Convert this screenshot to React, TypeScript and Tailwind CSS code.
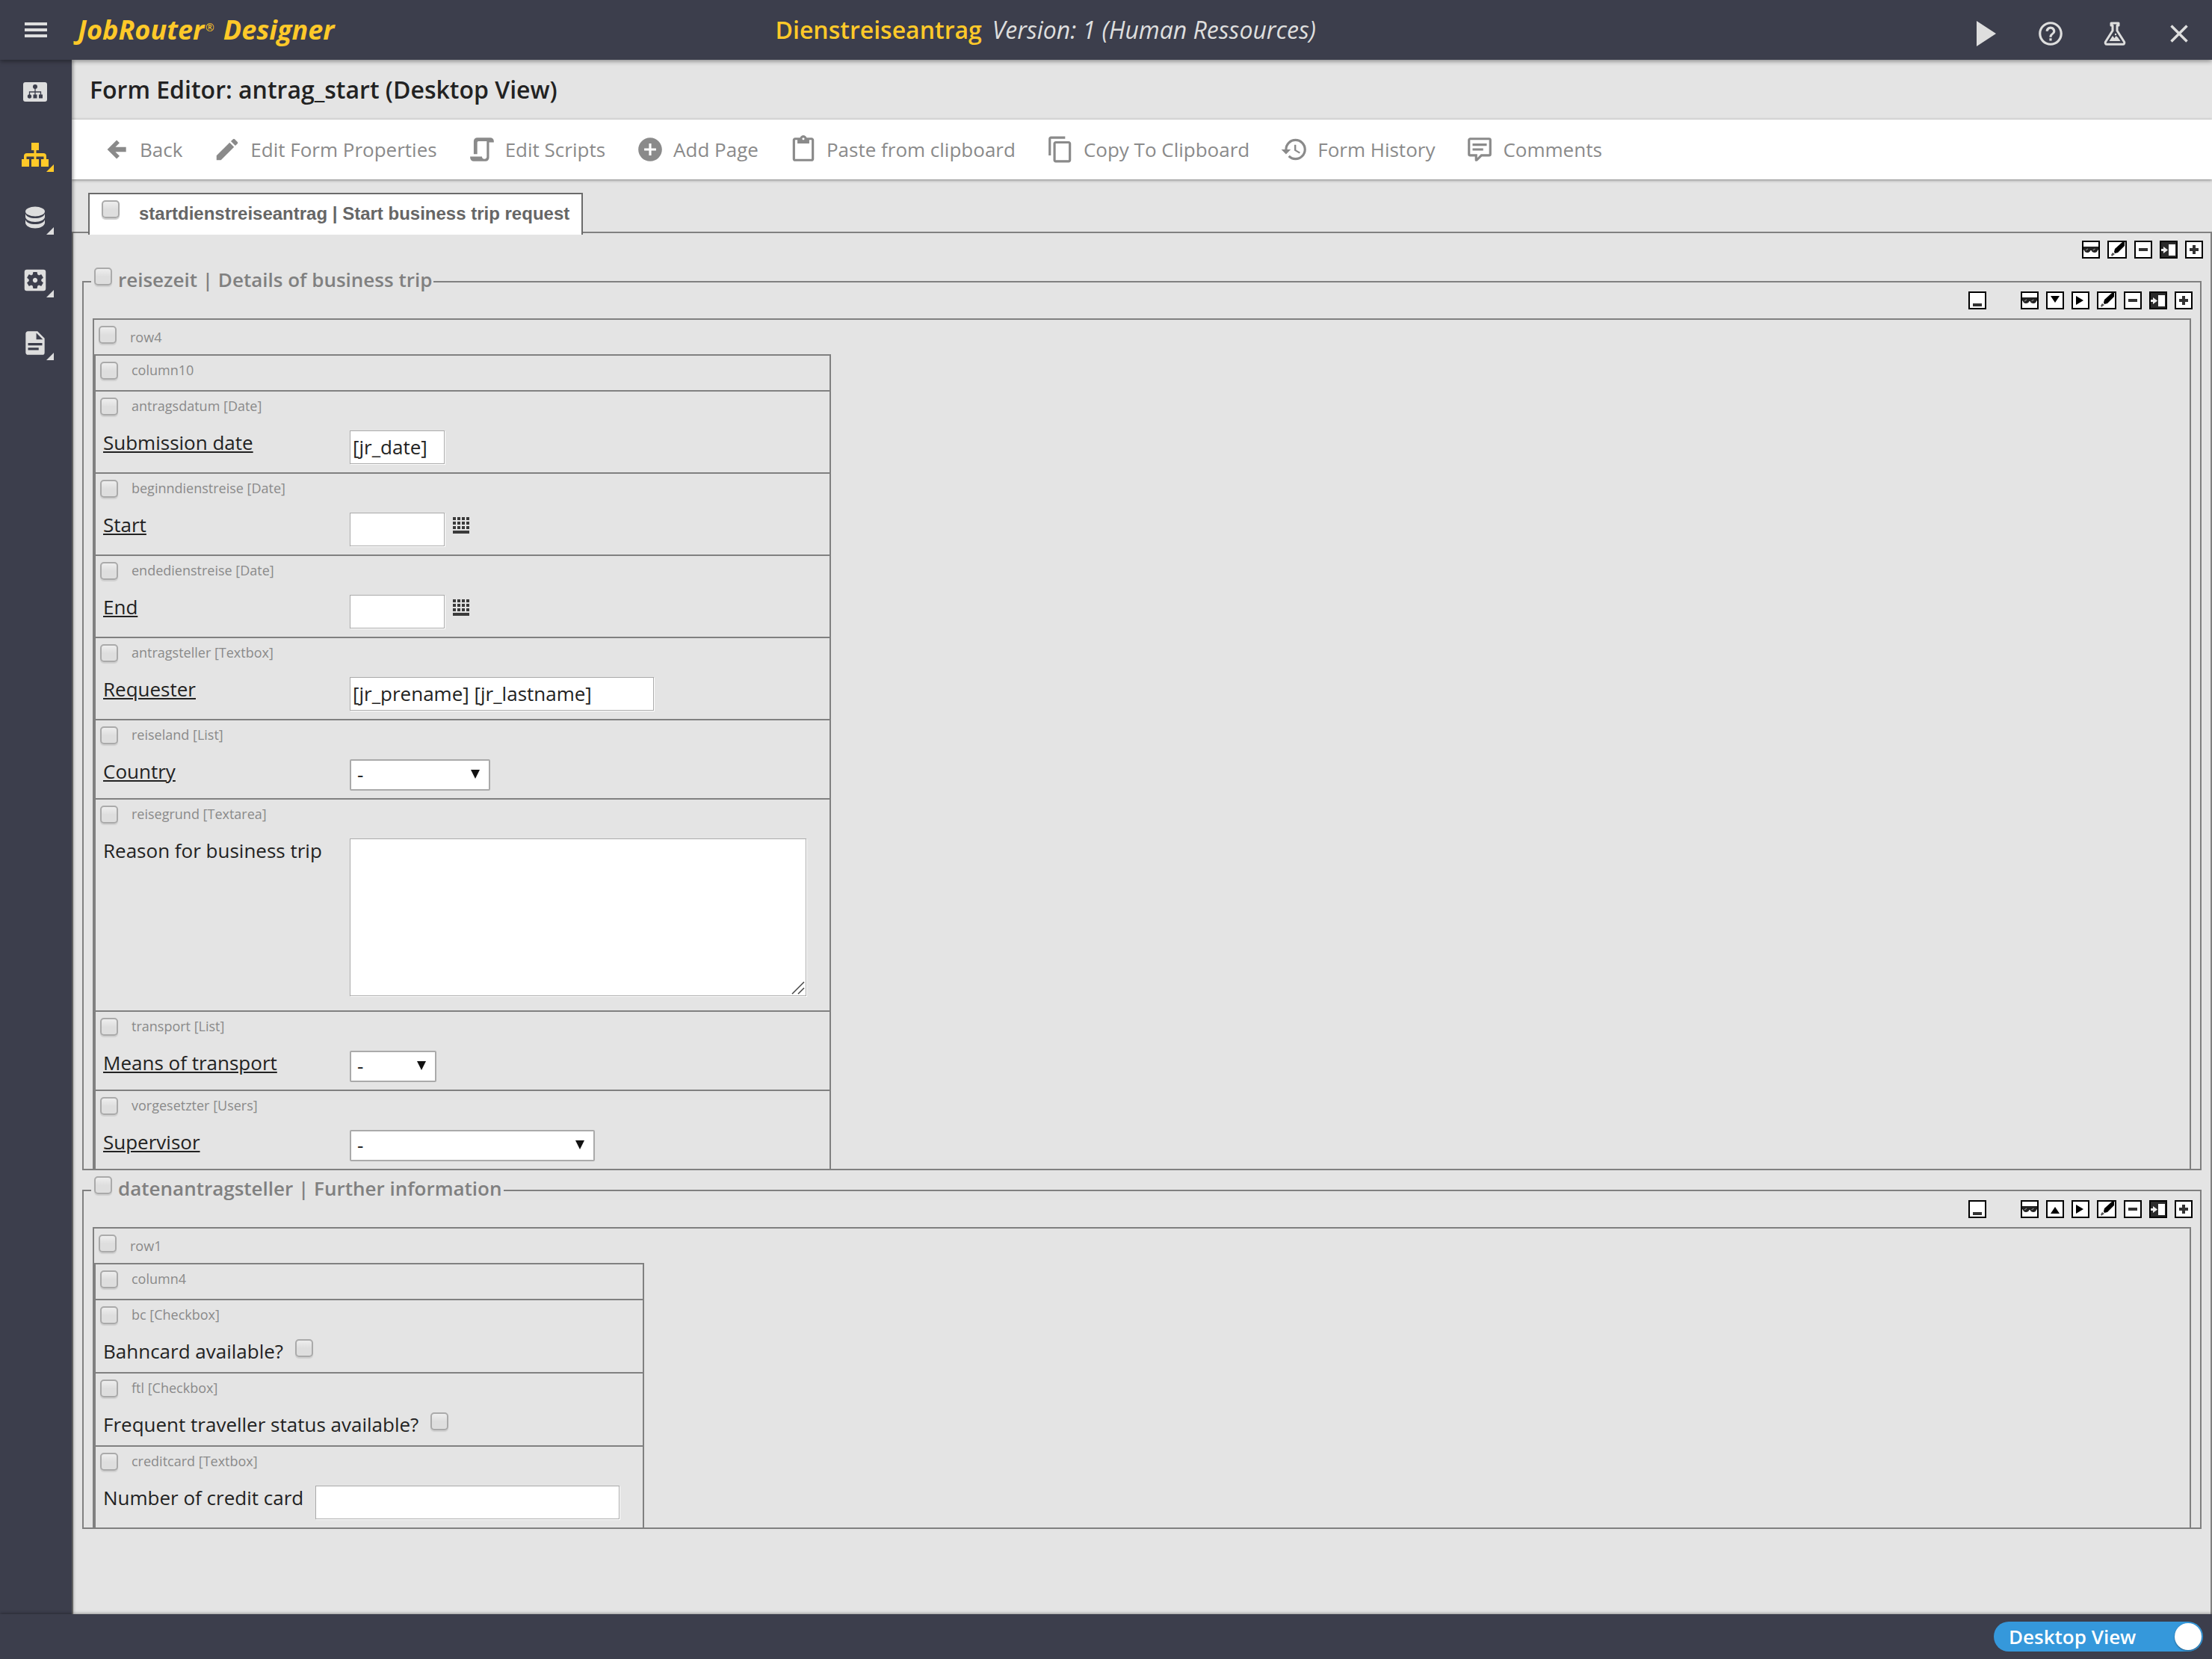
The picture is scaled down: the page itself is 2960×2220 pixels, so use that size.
import type { ReactNode } from "react"
import {
  MdAddCircle,
  MdContentCopy,
  MdContentPaste,
  MdEdit,
  MdHelpOutline,
  MdHistory,
  MdSettingsApplications,
} from "react-icons/md"

type ActionKind = "minimize" | "view" | "down" | "up" | "right" | "edit" | "remove" | "insert" | "add"

const pageActions: ActionKind[] = ["view", "edit", "remove", "insert", "add"]

const actionLabels: Record<ActionKind, string> = {
  minimize: "Minimize",
  view: "View",
  down: "Move down",
  up: "Move up",
  right: "Move right",
  edit: "Edit",
  remove: "Remove",
  insert: "Insert",
  add: "Add",
}

const actionDrawings: Record<ActionKind, ReactNode> = {
  minimize: <rect x="4" y="14" width="12" height="4" fill="#333" />,
  view: (
    <g>
      <path d="M0 6h20v4l-1 1c-.5 2-2 3-4 3s-4-1-4.500-3h-1C9 13 7 14 5 14s-3.500-1-4-3l-1-1z" fill="#222" />
      <path d="M3 11l3-2M12.500 11l3-2" stroke="#888" strokeWidth="1.200" />
    </g>
  ),
  down: <path d="M4 4h12l-6 9z" fill="#000" />,
  up: <path d="M4 16h12l-6-9z" fill="#000" />,
  right: <path d="M4 4v12l10-6z" fill="#000" />,
  edit: (
    <g>
      <path d="M20 0v5L11 14l-4 1-1-2 1-4L17 0z" fill="#000" />
      <path d="M4 14l3 2-4 3-1-2z" fill="#555" />
    </g>
  ),
  remove: <rect x="4" y="8" width="12" height="4" fill="#333" />,
  insert: (
    <g>
      <rect width="20" height="20" fill="#2b2b2b" />
      <rect x="10" y="3" width="9" height="15" fill="#fff" />
      <path d="M0 9h3V6l6 4.500L3 15v-3H0z" fill="#eee" />
    </g>
  ),
  add: <path d="M8 4h4v4h4v4h-4v4H8v-4H4V8h4z" fill="#333" />,
}

function ActionButton({ kind }: { kind: ActionKind }) {
  return (
    <button
      type="button"
      aria-label={actionLabels[kind]}
      className={`h-6 border-2 border-black bg-white ${kind === "edit" ? "w-[26px]" : "w-6"}`}
    >
      <svg viewBox="0 0 20 20" className="h-5 w-full" aria-hidden="true">
        {actionDrawings[kind]}
      </svg>
    </button>
  )
}

function CheckBox({ label, id }: { label?: string; id?: string }) {
  return (
    <input
      type="checkbox"
      id={id}
      aria-label={label}
      className="size-6 shrink-0 appearance-none rounded-[5px] border-2 border-[#aaa] bg-linear-to-b from-[#eee] via-[#dedede] to-[#dedede] shadow-[0_2px_1px_#cfcfcf]"
    />
  )
}

function MdiIcon({ d }: { d: string }) {
  return (
    <svg viewBox="0 0 24 24" className="size-[38px]" fill="currentColor" aria-hidden="true">
      <path d={d} />
    </svg>
  )
}

const toolbarItems: { label: string; icon: ReactNode }[] = [
  {
    label: "Back",
    icon: <MdiIcon d="M20,10V14H11L14.500,17.500L12.080,19.920L4.160,12L12.080,4.080L14.500,6.500L11,10H20Z" />,
  },
  { label: "Edit Form Properties", icon: <MdEdit className="size-[38px]" /> },
  {
    label: "Edit Scripts",
    icon: (
      <MdiIcon d="M14,20A2,2 0 0,0 16,18V5H9A1,1 0 0,0 8,6V16H5V5A3,3 0 0,1 8,2H19A3,3 0 0,1 22,5V6H18V18L18,19A3,3 0 0,1 15,22H5A3,3 0 0,1 2,19V18H12A2,2 0 0,0 14,20Z" />
    ),
  },
  { label: "Add Page", icon: <MdAddCircle className="size-[38px]" /> },
  { label: "Paste from clipboard", icon: <MdContentPaste className="size-[38px]" /> },
  { label: "Copy To Clipboard", icon: <MdContentCopy className="size-[38px]" /> },
  { label: "Form History", icon: <MdHistory className="size-[38px]" /> },
  {
    label: "Comments",
    icon: (
      <MdiIcon d="M9,22A1,1 0 0,1 8,21V18H4A2,2 0 0,1 2,16V4C2,2.890 2.900,2 4,2H20A2,2 0 0,1 22,4V16A2,2 0 0,1 20,18H13.900L10.200,21.710C10,21.900 9.750,22 9.500,22V22H9M10,16V19.080L13.080,16H20V4H4V16H10M6,7H18V9H6V7M6,11H15V13H6V11Z" />
    ),
  },
]

const sideItems: { label: string; icon: ReactNode; active?: boolean; menu?: boolean }[] = [
  {
    label: "Overview",
    icon: (
      <svg viewBox="0 0 32 26" className="h-[26px] w-8" aria-hidden="true">
        <rect width="32" height="26" rx="3" fill="currentColor" />
        <g fill="#3c3e4c">
          <circle cx="16" cy="6" r="3" />
          <circle cx="8.500" cy="19" r="2.700" />
          <rect x="13.500" y="16.500" width="5" height="5" />
          <rect x="21" y="16.500" width="5" height="5" />
        </g>
        <path d="M16 8v9M8.500 17v-4h15v4" fill="none" stroke="#3c3e4c" strokeWidth="1.300" />
      </svg>
    ),
  },
  {
    label: "Processes",
    active: true,
    menu: true,
    icon: (
      <svg viewBox="0 0 36 32" className="h-8 w-9" fill="currentColor" aria-hidden="true">
        <path d="M13 0h10v10h-3.500v4H29a4 4 0 0 1 4 4v4h3v10H26V22h3.500v-3.500h-10V22H23v10H13V22h3.500v-3.500h-10V22H10v10H0V22h3v-4a4 4 0 0 1 4-4h9.500v-4H13z" />
      </svg>
    ),
  },
  {
    label: "Data",
    menu: true,
    icon: (
      <svg viewBox="0 0 26 30" className="h-[30px] w-[26px]" fill="currentColor" aria-hidden="true">
        <ellipse cx="13" cy="7" rx="13" ry="6.500" />
        <path d="M0 10c1.500 4 6.500 6 13 6s11.500-2 13-6v4c0 4-6 7-13 7S0 18 0 14z" />
        <path d="M0 18c1.500 4 6.500 6 13 6s11.500-2 13-6v4c0 4-6 7.500-13 7.500S0 26 0 22z" />
      </svg>
    ),
  },
  { label: "Settings", menu: true, icon: <MdSettingsApplications className="size-[38px]" /> },
  {
    label: "Documents",
    menu: true,
    icon: (
      <MdiIcon d="M13,9H18.500L13,3.500V9M6,2H14L20,8V20A2,2 0 0,1 18,22H6C4.890,22 4,21.100 4,20V4C4,2.890 4.890,2 6,2M15,18V16H6V18H15M18,14V12H6V14H18Z" />
    ),
  },
]

function Header() {
  return (
    <header className="relative z-20 flex h-20 items-center bg-[#3c3e4c] shadow-[0_2px_6px_rgba(0,0,0,0.4)]">
      <button type="button" aria-label="Menu" className="flex h-20 w-24 items-center justify-center text-[#dedede]">
        <svg viewBox="0 0 30 20" className="h-5 w-[30px]" fill="currentColor" aria-hidden="true">
          <path d="M0 0h30v4H0zM0 8h30v4H0zM0 16h30v4H0z" />
        </svg>
      </button>
      <a href="#" className="flex items-start pl-2 text-[36px] leading-[50px] font-bold text-[#ffc929] italic">
        JobRouter
        <span className="pt-3 pl-0.5 text-sm font-normal not-italic">®</span>
        <span className="pl-3">Designer</span>
      </a>
      <div className="flex flex-1 items-baseline justify-center gap-3.5 text-[32px] leading-[44px]">
        <span className="font-semibold text-[#ffc929]">Dienstreiseantrag</span>
        <span className="text-[#dedede] italic">Version: 1 (Human Ressources)</span>
      </div>
      <nav className="flex h-20 w-[609px] justify-end pt-2.5 pr-px text-[#dedede]">
        <button type="button" aria-label="Run" className="flex w-[86px] items-center justify-center">
          <svg viewBox="0 0 26 34" className="h-[34px] w-[26px]" fill="currentColor" aria-hidden="true">
            <path d="M0 0l26 17L0 34z" />
          </svg>
        </button>
        <button type="button" aria-label="Help" className="flex w-[86px] items-center justify-center">
          <MdHelpOutline className="size-[38px]" />
        </button>
        <button type="button" aria-label="Test" className="flex w-[86px] items-center justify-center">
          <svg viewBox="0 0 30 32" className="h-8 w-[30px]" aria-hidden="true">
            <path
              d="M10 2h10v3h-2v7l9.500 15c.8 1.500 0 3.300-1.800 3.300H4.300c-1.800 0-2.600-1.800-1.800-3.300L12 12V5h-2z"
              fill="none"
              stroke="currentColor"
              strokeWidth="3"
              strokeLinejoin="round"
            />
            <path d="M7.500 26l4.500-7 2.500 3 2-3 2.500 2 3.500 5z" fill="currentColor" />
            <circle cx="16" cy="17" r="1.200" fill="currentColor" />
          </svg>
        </button>
        <button type="button" aria-label="Close" className="flex w-[86px] items-center justify-center">
          <svg viewBox="0 0 24 24" className="size-6" aria-hidden="true">
            <path d="M1.500 1.500l21 21M22.500 1.500l-21 21" stroke="currentColor" strokeWidth="3.500" />
          </svg>
        </button>
      </nav>
    </header>
  )
}

function Sidebar() {
  return (
    <nav className="relative z-10 w-24 shrink-0 bg-[#3c3e4c] pt-px shadow-[2px_0_4px_rgba(0,0,0,0.35)]">
      {sideItems.map((item) => (
        <button
          key={item.label}
          type="button"
          aria-label={item.label}
          className={`relative flex h-[84px] w-full items-center justify-center pr-0.5 ${
            item.active ? "text-[#ffc929]" : "text-[#dedede]"
          }`}
        >
          {item.icon}
          {item.menu && (
            <svg viewBox="0 0 10 10" className="absolute right-6 bottom-[19px] size-2.5" aria-hidden="true">
              <path d="M10 0v10H0z" fill="currentColor" />
            </svg>
          )}
        </button>
      ))}
    </nav>
  )
}

function Section({ title, actions, children }: { title: string; actions: ActionKind[]; children: ReactNode }) {
  return (
    <fieldset className="border-2 border-[#808080]">
      <legend className="ml-2.5 flex h-[42px] gap-2 pr-0.5 pl-1 text-[26px] leading-9 font-semibold text-[#808080]">
        <span className="flex pt-0.5">
          <CheckBox label={title} />
        </span>
        {title}
      </legend>
      <div className="-mt-2 mb-3 flex justify-end gap-2.5 pr-2.5">
        <span className="mr-9 flex">
          <ActionButton kind="minimize" />
        </span>
        {actions.map((kind) => (
          <ActionButton key={kind} kind={kind} />
        ))}
      </div>
      {children}
    </fieldset>
  )
}

function Row({ name, column, children }: { name: string; column: string; children: ReactNode }) {
  return (
    <div className="mx-3 border-2 border-b-0 border-[#808080]">
      <div className="flex h-[46px] gap-[18px] pt-2 pl-1.5 text-lg leading-[30px] text-[#8a8a8a]">
        <CheckBox label={name} />
        {name}
      </div>
      <div className="w-fit border-x-2 border-[#808080]">
        <div className="flex h-12 gap-[18px] border-t-2 border-[#808080] pt-2 pl-1.5 text-lg leading-[22px] text-[#8a8a8a]">
          <CheckBox label={column} />
          {column}
        </div>
        {children}
      </div>
    </div>
  )
}

type FieldProps = {
  id: string
  kind: string
  label: string
  required?: boolean
  wide?: boolean
  children: ReactNode
}

function Field({ id, kind, label, required, wide, children }: FieldProps) {
  return (
    <div className="border-t-2 border-[#808080] pt-2 pb-2.5">
      <div className="flex gap-[18px] pl-1.5 text-lg leading-[22px] text-[#8a8a8a]">
        <CheckBox label={id} />
        {id} [{kind}]
      </div>
      <div className="mt-[18px] flex items-start pr-[31px] pl-2.5">
        <label
          htmlFor={id}
          className={`text-[26px] leading-9 text-[#222] ${wide ? "w-[330px]" : "pr-4"} ${
            required ? "underline" : ""
          }`}
        >
          {label}
        </label>
        <div className="flex pt-0.5">{children}</div>
      </div>
    </div>
  )
}

function TextInput({ id, size, value }: { id: string; size: "date" | "text"; value?: string }) {
  return (
    <input
      id={id}
      type="text"
      defaultValue={value}
      className={`mb-px h-[45px] border border-[#aaa] bg-white px-[3px] pb-0.5 text-[26px] text-[#222] shadow-[1px_1px_0_#fff] ${
        size === "date" ? "w-[127px]" : "w-[407px]"
      }`}
    />
  )
}

function SelectBox({ id, width }: { id: string; width: string }) {
  return (
    <div className={`relative ${width}`}>
      <select
        id={id}
        className="h-[42px] w-full appearance-none rounded-xs border-2 border-[#aaa] bg-white pb-0.5 pl-2 text-[26px] leading-9 text-[#222]"
      >
        <option>-</option>
      </select>
      <svg viewBox="0 0 12 12" className="pointer-events-none absolute top-3.5 right-3.5 size-3" aria-hidden="true">
        <path d="M0 0h12L6 12z" fill="#111" />
      </svg>
    </div>
  )
}

function CalendarButton({ label }: { label: string }) {
  return (
    <button type="button" aria-label={label} className="ml-2.5 flex pt-[5px]">
      <svg viewBox="0 0 24 24" className="size-6" fill="#3a3a3a" aria-hidden="true">
        {[1, 7, 13].map((y) =>
          [1, 7, 13, 19].map((x) => <rect key={`${x}-${y}`} x={x} y={y} width="4" height="4" />)
        )}
        <rect x="1" y="19" width="22" height="4" />
      </svg>
    </button>
  )
}

export default function App() {
  return (
    <div className="flex min-h-screen flex-col bg-[#e4e4e4] font-['Open_Sans',sans-serif]">
      <Header />
      <div className="flex flex-1">
        <Sidebar />
        <main className="flex min-w-0 flex-1 flex-col">
          <h1 className="flex h-20 items-center pl-6 text-[32px] leading-[44px] font-semibold text-[#222]">
            Form Editor: antrag_start (Desktop View)
          </h1>
          <div className="flex h-20 items-center gap-[41px] bg-white pl-[41px] text-[26px] leading-9 text-[#8a8a8a] shadow-[0_1px_4px_rgba(0,0,0,0.45)]">
            {toolbarItems.map((item) => (
              <button key={item.label} type="button" className="flex items-center gap-3 whitespace-nowrap">
                {item.icon}
                {item.label}
              </button>
            ))}
          </div>

          <div className="relative z-1 mt-[18px] -mb-1 ml-[22px] flex h-14 w-fit gap-[26px] border-2 border-b-0 border-[#6b6b6b] bg-white pt-2 pr-4 pl-4 font-['Liberation_Sans',sans-serif] text-2xl leading-9 font-bold text-[#666]">
            <CheckBox id="page-tab" />
            <label htmlFor="page-tab">startdienstreiseantrag | Start business trip request</label>
          </div>

          <div className="flex-1 border-2 border-b-0 border-[#808080]">
            <div className="flex justify-end gap-2.5 py-2.5 pr-2.5">
              {pageActions.map((kind) => (
                <ActionButton key={kind} kind={kind} />
              ))}
            </div>
            <div className="flex flex-col gap-1.5 px-3">
              <Section
                title="reisezeit | Details of business trip"
                actions={["view", "down", "right", "edit", "remove", "insert", "add"]}
              >
                <Row name="row4" column="column10">
                  <Field id="antragsdatum" kind="Date" label="Submission date" required wide>
                    <TextInput id="antragsdatum" size="date" value="[jr_date]" />
                  </Field>
                  <Field id="beginndienstreise" kind="Date" label="Start" required wide>
                    <TextInput id="beginndienstreise" size="date" />
                    <CalendarButton label="Pick start date" />
                  </Field>
                  <Field id="endedienstreise" kind="Date" label="End" required wide>
                    <TextInput id="endedienstreise" size="date" />
                    <CalendarButton label="Pick end date" />
                  </Field>
                  <Field id="antragsteller" kind="Textbox" label="Requester" required wide>
                    <TextInput id="antragsteller" size="text" value="[jr_prename] [jr_lastname]" />
                  </Field>
                  <Field id="reiseland" kind="List" label="Country" required wide>
                    <SelectBox id="reiseland" width="w-[188px]" />
                  </Field>
                  <Field id="reisegrund" kind="Textarea" label="Reason for business trip" wide>
                    <div className="relative pb-[9px]">
                      <textarea
                        id="reisegrund"
                        className="block h-[211px] w-[611px] resize-none border border-[#aaa] bg-white p-1 text-[26px] text-[#222] shadow-[1px_1px_0_#fff]"
                      />
                      <svg
                        viewBox="0 0 18 18"
                        className="pointer-events-none absolute right-0.5 bottom-[11px] size-[18px]"
                        aria-hidden="true"
                      >
                        <path d="M1 17L17 1M9 17l8-8" stroke="#444" strokeWidth="1.500" />
                      </svg>
                    </div>
                  </Field>
                  <Field id="transport" kind="List" label="Means of transport" required wide>
                    <SelectBox id="transport" width="w-[116px]" />
                  </Field>
                  <Field id="vorgesetzter" kind="Users" label="Supervisor" required wide>
                    <SelectBox id="vorgesetzter" width="w-[328px]" />
                  </Field>
                </Row>
              </Section>

              <Section
                title="datenantragsteller | Further information"
                actions={["view", "up", "right", "edit", "remove", "insert", "add"]}
              >
                <Row name="row1" column="column4">
                  <Field id="bc" kind="Checkbox" label="Bahncard available?">
                    <CheckBox id="bc" />
                  </Field>
                  <Field id="ftl" kind="Checkbox" label="Frequent traveller status available?">
                    <CheckBox id="ftl" />
                  </Field>
                  <Field id="creditcard" kind="Textbox" label="Number of credit card">
                    <TextInput id="creditcard" size="text" />
                  </Field>
                </Row>
              </Section>
            </div>
          </div>
        </main>
      </div>
      <footer className="relative z-20 flex h-[60px] items-center justify-end bg-[#3c3e4c] pr-3 shadow-[0_-1px_4px_rgba(0,0,0,0.35)]">
        <button
          type="button"
          role="switch"
          aria-checked="true"
          className="flex h-10 w-[280px] items-center justify-between rounded-full bg-[#3598db] pr-0.5 pl-5 text-[26px] leading-9 font-semibold text-white"
        >
          Desktop View
          <span className="size-9 rounded-full bg-white shadow-[0_1px_2px_rgba(0,0,0,0.4)]" />
        </button>
      </footer>
    </div>
  )
}
